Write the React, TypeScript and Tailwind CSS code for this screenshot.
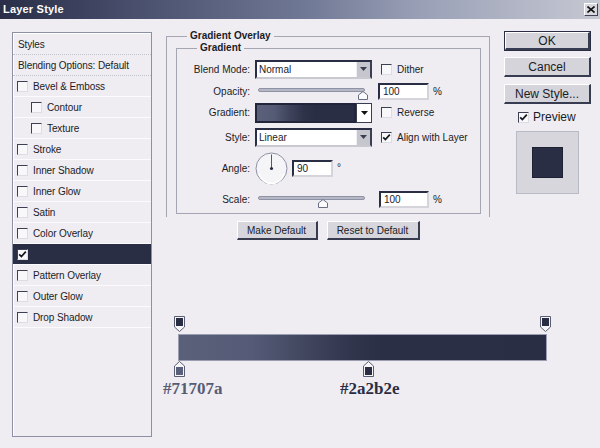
import React from "react";

const FONT = { fontFamily: '"Liberation Sans", Arial, sans-serif' };

function Check({ checked = false }: { checked?: boolean }) {
  return (
    <span className="w-[11px] h-[11px] shrink-0 border border-t-[#3c4052] border-l-[#3c4052] border-r-[#dcdce2] border-b-[#dcdce2] bg-[#f8f8fa] flex items-center justify-center">
      {checked && (
        <svg width="9" height="9" viewBox="0 0 9 9">
          <path d="M1.2 4.3 L3.4 6.6 L7.8 1.6" fill="none" stroke="#15171f" strokeWidth="1.7" />
        </svg>
      )}
    </span>
  );
}

function Tri({ color = "#1f2130" }: { color?: string }) {
  return (
    <svg width="7" height="4" viewBox="0 0 7 4">
      <path d="M0 0 H7 L3.5 4 Z" fill={color} />
    </svg>
  );
}

function Select({ value }: { value: string }) {
  return (
    <div className="w-[117px] h-[19px] flex border-2 border-t-[#2a2e44] border-l-[#2a2e44] border-r-[#3a3e52] border-b-[#c9c9d1] bg-white">
      <div className="flex-1 pl-[2px] flex items-center text-[10px] text-[#1a1c28]">{value}</div>
      <div className="w-[14px] h-full bg-[#c6c6ce] border-l border-l-[#f0f0f4] flex items-center justify-center">
        <Tri color="#3a3e52" />
      </div>
    </div>
  );
}

function Slider({ thumb, track = 4 }: { thumb: number; track?: number }) {
  return (
    <div className="relative w-[117px] h-[14px]">
      <div
        className="absolute left-[3px] w-[107px] h-[4px] bg-[#b6b8c6] border border-[#8e92a4] rounded-full"
        style={{ top: track }}
      />
      <svg className="absolute top-[7px]" style={{ left: thumb }} width="10" height="9" viewBox="0 0 10 9">
        <path d="M0.5 8.5 V4 L5 0.5 L9.5 4 V8.5 Z" fill="#fbfbfd" stroke="#6a6e82" />
      </svg>
    </div>
  );
}

function Input({ value, w }: { value: string; w: string }) {
  return (
    <div className={`${w} h-[17px] border-2 border-t-[#2a2e44] border-l-[#2a2e44] border-r-[#d4d4da] border-b-[#d4d4da] bg-white flex items-center pl-[3px] text-[10px] text-[#1a1c28]`}>
      {value}
    </div>
  );
}

function Btn({ label, w }: { label: string; w: string }) {
  return (
    <div className={`${w} h-[19px] bg-[#d6d6dc] border-t border-l border-t-white border-l-white border-b-2 border-r-2 border-b-[#383c50] border-r-[#383c50] flex items-center justify-center text-[10px] text-[#1a1c28]`}>
      {label}
    </div>
  );
}

function RBtn({ label, def = false }: { label: string; def?: boolean }) {
  return (
    <div className={`w-[87px] h-[20px] ${def ? "border border-[#2a2e44]" : ""}`}>
      <div className="w-full h-full bg-[#d4d4da] border-t border-l border-t-white border-l-white border-b-2 border-r-2 border-b-[#383c50] border-r-[#383c50] flex items-center justify-center text-[12px] text-[#1a1c28]">
        {label}
      </div>
    </div>
  );
}

function TopStop() {
  return (
    <svg width="11" height="16" viewBox="0 0 11 16">
      <path d="M0.5 0.5 H10.5 V11 L5.5 15.5 L0.5 11 Z" fill="#f6f6f8" stroke="#5a5e72" />
      <rect x="2" y="2" width="7" height="8" fill="#2a2e44" />
    </svg>
  );
}

function BottomStop({ fill }: { fill: string }) {
  return (
    <svg width="11" height="16" viewBox="0 0 11 16">
      <path d="M5.5 0.5 L10.5 5 V15.5 H0.5 V5 Z" fill="#f6f6f8" stroke="#5a5e72" />
      <rect x="2" y="6" width="7" height="8" fill={fill} />
    </svg>
  );
}

const rows: { label: string; indent?: boolean; checked?: boolean; selected?: boolean; plain?: boolean; sep?: boolean }[] = [
  { label: "Styles", plain: true, sep: true },
  { label: "Blending Options: Default", plain: true, sep: true },
  { label: "Bevel & Emboss" },
  { label: "Contour", indent: true },
  { label: "Texture", indent: true },
  { label: "Stroke" },
  { label: "Inner Shadow" },
  { label: "Inner Glow" },
  { label: "Satin" },
  { label: "Color Overlay" },
  { label: "", checked: true, selected: true },
  { label: "Pattern Overlay" },
  { label: "Outer Glow" },
  { label: "Drop Shadow" },
];

export default function App() {
  return (
    <div className="w-[600px] h-[448px] overflow-hidden bg-[#efedf1] text-[#1a1c28]" style={FONT}>
      {/* Title bar */}
      <div className="h-[19px] flex items-center justify-between pl-[3px] pr-[2px] bg-[linear-gradient(90deg,#2a2e48_0%,#4c5370_25%,#6e7793_50%,#99a0b6_70%,#c6c8d2_100%)]">
        <span className="text-[11px] font-bold text-white tracking-[0.2px]">Layer Style</span>
        <div className="w-[14px] h-[13px] bg-[#d8d8de] border border-t-white border-l-white border-r-[#404456] border-b-[#404456] flex items-center justify-center">
          <svg width="8" height="7" viewBox="0 0 8 7">
            <path d="M0.5 0.5 L7.5 6.5 M7.5 0.5 L0.5 6.5" stroke="#111" strokeWidth="1.6" />
          </svg>
        </div>
      </div>

      {/* Body */}
      <div className="flex pl-[12px] pt-[12px]">
        {/* Left panel */}
        <div className="mt-[1px] w-[140px] h-[405px] border border-[#8b90a4] shadow-[inset_1px_1px_0_#ffffff] pt-[1px] flex flex-col">
          {rows.map((r, i) => (
            <div
              key={i}
              className={`h-[21px] shrink-0 flex items-center border-b ${r.sep ? "border-[#c2c4ce] border-dotted" : "border-[#fbfbfd]"} ${r.selected ? "bg-[#2a2e44]" : ""} ${r.indent ? "pl-[18px]" : "pl-[4px]"} text-[10px] tracking-[-0.1px]`}
            >
              {r.plain ? (
                <span className="pl-[1px]">{r.label}</span>
              ) : (
                <>
                  <Check checked={r.checked} />
                  <span className="ml-[5px]">{r.label}</span>
                </>
              )}
            </div>
          ))}
        </div>

        {/* Right part */}
        <div className="ml-[14px] flex flex-col">
          <div className="flex">
            {/* Middle column */}
            <div className="w-[324px] flex flex-col">
              <div className="relative mt-[5px] h-[181px] border-t border-l border-r border-[#a4a6b4]">
                <span className="absolute -top-[7px] left-[20px] px-[3px] bg-[#efedf1] text-[10px] font-bold leading-[12px]">
                  Gradient Overlay
                </span>
                <div className="relative ml-[9px] mt-[11px] w-[305px] border border-[#a4a6b4] pb-[4px]">
                  <span className="absolute -top-[7px] left-[20px] px-[3px] bg-[#efedf1] text-[10px] font-bold leading-[12px]">
                    Gradient
                  </span>
                  {/* Blend Mode */}
                  <div className="mt-[10px] h-[20px] flex items-center text-[10px]">
                    <span className="w-[73px] text-right">Blend Mode:</span>
                    <div className="ml-[5px]"><Select value="Normal" /></div>
                    <div className="ml-[9px] flex items-center">
                      <Check />
                      <span className="ml-[5px]">Dither</span>
                    </div>
                  </div>
                  {/* Opacity */}
                  <div className="mt-[2px] h-[20px] flex items-center text-[10px]">
                    <span className="w-[73px] text-right">Opacity:</span>
                    <div className="ml-[5px]"><Slider thumb={103} /></div>
                    <div className="ml-[6px]"><Input value="100" w="w-[51px]" /></div>
                    <span className="ml-[4px]">%</span>
                  </div>
                  {/* Gradient */}
                  <div className="mt-[1px] h-[21px] flex items-center text-[10px]">
                    <span className="w-[73px] text-right">Gradient:</span>
                    <div className="ml-[5px] flex">
                      <div className="w-[101px] h-[20px] border-2 border-t-[#23263a] border-l-[#23263a] border-r-[#23263a] border-b-[#23263a] bg-[linear-gradient(90deg,#5b617a_0%,#555b75_18%,#3e435b_34%,#2f334a_48%,#2a2e44_60%,#2a2e44_100%)]" />
                      <div className="w-[16px] h-[20px] bg-white border border-[#3a3e52] flex items-center justify-center">
                        <Tri color="#111" />
                      </div>
                    </div>
                    <div className="ml-[9px] flex items-center">
                      <Check />
                      <span className="ml-[5px]">Reverse</span>
                    </div>
                  </div>
                  {/* Style */}
                  <div className="mt-[4px] h-[20px] flex items-center text-[10px]">
                    <span className="w-[73px] text-right">Style:</span>
                    <div className="ml-[5px]"><Select value="Linear" /></div>
                    <div className="ml-[9px] flex items-center">
                      <Check checked />
                      <span className="ml-[5px]">Align with Layer</span>
                    </div>
                  </div>
                  {/* Angle */}
                  <div className="mt-[4px] h-[34px] flex items-center text-[10px]">
                    <span className="w-[73px] text-right">Angle:</span>
                    <svg className="ml-[5px]" width="33" height="33" viewBox="0 0 33 33">
                      <circle cx="16.5" cy="16.5" r="15.5" fill="#f5f5f7" stroke="#8e92a4" />
                      <path d="M4 22 A13 13 0 0 0 29 22" fill="none" stroke="#ffffff" strokeWidth="1.5" />
                      <line x1="16.5" y1="16.5" x2="16.5" y2="2.5" stroke="#55596d" strokeWidth="1" />
                      <circle cx="16.5" cy="16.5" r="1.6" fill="#2a2e44" />
                    </svg>
                    <div className="ml-[4px]"><Input value="90" w="w-[41px]" /></div>
                    <span className="ml-[4px] self-start mt-[9px]">°</span>
                  </div>
                  {/* Scale */}
                  <div className="mt-[4px] h-[20px] flex items-center text-[10px]">
                    <span className="w-[73px] text-right">Scale:</span>
                    <div className="ml-[5px]"><Slider thumb={63} /></div>
                    <div className="ml-[7px]"><Input value="100" w="w-[50px]" /></div>
                    <span className="ml-[4px]">%</span>
                  </div>
                </div>
              </div>
              <div className="mt-[4px] flex justify-center gap-[9px]">
                <Btn label="Make Default" w="w-[81px]" />
                <Btn label="Reset to Default" w="w-[93px]" />
              </div>
            </div>

            {/* Right column */}
            <div className="ml-[14px] w-[87px] flex flex-col">
              <RBtn label="OK" def />
              <div className="mt-[6px]"><RBtn label="Cancel" /></div>
              <div className="mt-[7px]"><RBtn label="New Style..." /></div>
              <div className="mt-[6px] h-[14px] ml-[14px] flex items-center text-[12px]">
                <Check checked />
                <span className="ml-[4px]">Preview</span>
              </div>
              <div className="mt-[7px] ml-[12px] w-[63px] h-[63px] bg-[#d6d6dc] border border-[#b8bac6] flex items-center justify-center">
                <div className="w-[31px] h-[31px] bg-[#2a2e44] border border-[#1e2132]" />
              </div>
            </div>
          </div>

          {/* Gradient editor */}
          <div className="relative mt-[76px] w-[400px] h-[90px]">
            <div className="absolute left-[8px] top-0"><TopStop /></div>
            <div className="absolute left-[374px] top-0"><TopStop /></div>
            <div className="absolute left-[12px] top-[18px] w-[369px] h-[27px] border border-[#9a9eb0] bg-[linear-gradient(90deg,#5a6079_0%,#555b76_20%,#454a63_32%,#343850_44%,#2b2f45_55%,#2a2e44_100%)]" />
            <div className="absolute left-[8px] top-[45px]"><BottomStop fill="#5b607a" /></div>
            <div className="absolute left-[197px] top-[45px]"><BottomStop fill="#2a2e44" /></div>
            <span
              className="absolute left-[-3px] top-[63px] text-[17px] font-bold leading-[20px] text-[#575c74]"
              style={{ fontFamily: '"Liberation Serif", "Times New Roman", serif' }}
            >
              #71707a
            </span>
            <span
              className="absolute left-[174px] top-[63px] text-[17px] font-bold leading-[20px] text-[#2a2e44]"
              style={{ fontFamily: '"Liberation Serif", "Times New Roman", serif' }}
            >
              #2a2b2e
            </span>
          </div>
        </div>
      </div>
    </div>
  );
}
